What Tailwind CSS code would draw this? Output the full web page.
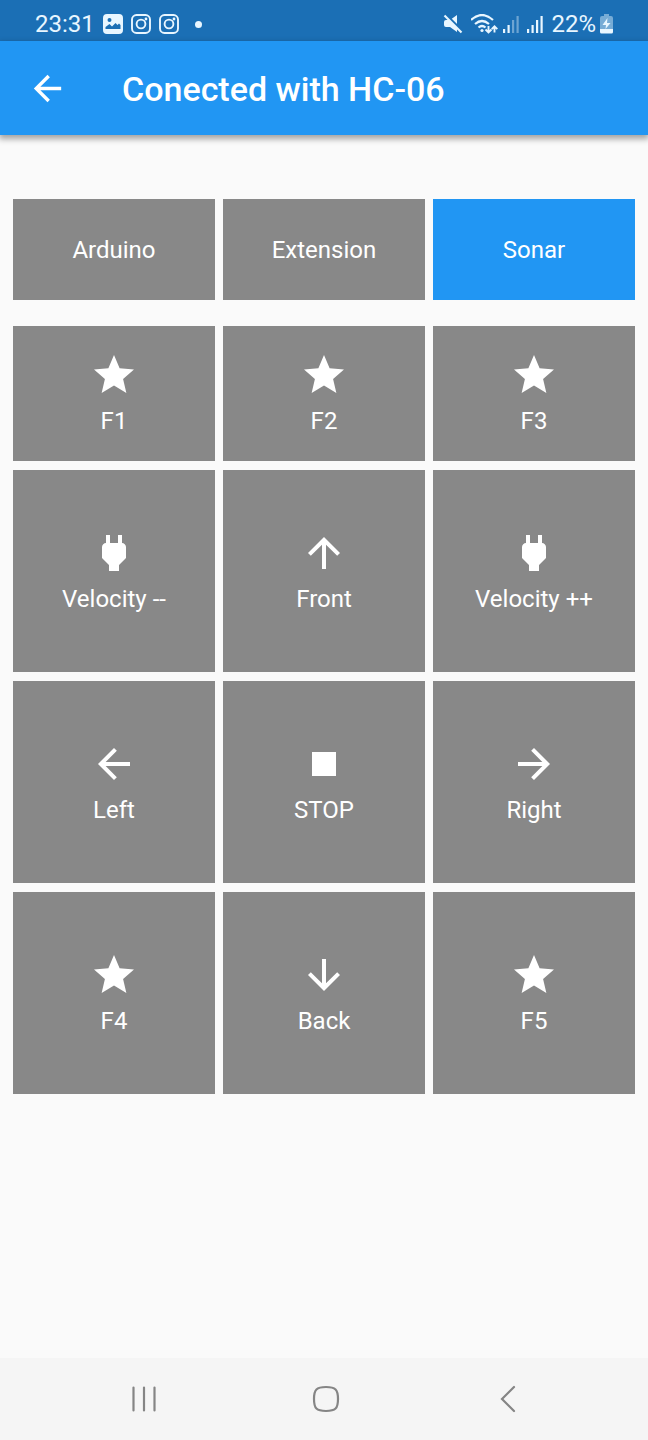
<!DOCTYPE html>
<html lang="en">
<head>
<meta charset="utf-8">
<meta name="viewport" content="width=device-width, initial-scale=1">
<title>Conected with HC-06</title>
<script src="https://cdn.jsdelivr.net/npm/@tailwindcss/browser@4"></script>
</head>
<body class="flex min-h-screen flex-col bg-[#fafafa] font-['Roboto',sans-serif] text-2xl leading-7 text-white">
<svg class="hidden">
  <symbol id="star" viewBox="0 0 24 24"><path d="M12 17.27 18.18 21l-1.64-7.03L22 9.24l-7.19-.61L12 2 9.19 8.63 2 9.24l5.46 4.73L5.82 21z"/></symbol>
  <symbol id="plug" viewBox="0 0 24 24"><path d="M16.01 7 16 3h-2v4h-4V3H8v4h-.01C7 6.990 6 7.990 6 8.990v5.490L9.500 18v3h5v-3l3.500-3.510v-5.500c0-1-1-2-1.990-1.990z"/></symbol>
  <symbol id="left" viewBox="0 0 24 24"><path d="M20 11H7.830l5.590-5.590L12 4l-8 8 8 8 1.410-1.410L7.830 13H20v-2z"/></symbol>
  <symbol id="stop" viewBox="0 0 24 24"><path d="M6 6h12v12H6z"/></symbol>
  <symbol id="insta" viewBox="0 0 20 20"><g fill="none" stroke="currentColor" stroke-width="1.900"><rect x="1" y="1" width="18" height="18" rx="4.500"/><circle cx="10" cy="10" r="4.400"/></g><circle cx="15" cy="5" r="1.400" fill="currentColor"/></symbol>
</svg>

<div class="flex h-[41px] items-center justify-between bg-[#1b6fb5] pt-[7px] pr-[35px] pl-[35px] text-[#e8f6ff]">
  <div class="flex items-center">
    <span class="mr-2">23:31</span>
    <svg class="mr-2 size-5" viewBox="0 0 20 20"><path fill="currentColor" fill-rule="evenodd" d="M4 0h12q4 0 4 4v12q0 4-4 4H4q-4 0-4-4V4q0-4 4-4zM2.500 15h15v-4l-1.500-1.500-1.500 1.500L12.500 9 9 12.500 6.500 10l-4 3zM6.500 4a2 2 0 1 0 0 4 2 2 0 0 0 0-4z"/></svg>
    <svg class="mr-2 size-5"><use href="#insta"/></svg>
    <svg class="mr-4 size-5"><use href="#insta"/></svg>
    <span class="size-[7px] rounded-full bg-current"></span>
  </div>
  <div class="flex items-center">
    <svg class="mr-2 size-5" viewBox="0 0 20 20" fill="currentColor"><path d="M3 6h4l7-5v17l-7-5H3q-2 0-2-2V8q0-2 2-2z"/><path d="M1.500-.5 20 18" fill="none" stroke="#1b6fb5" stroke-width="3"/><path d="m1.500 1.500 17 17" fill="none" stroke="currentColor" stroke-width="2.200"/></svg>
    <svg class="mr-1 h-5 w-7" viewBox="0 0 28 20" fill="none" stroke="currentColor" stroke-width="2.200"><path d="M0 6q11-10 22 0M4 10q7-6 14 0M7.500 13.500q3.500-3 7 0"/><circle cx="11" cy="16.500" r="1.600" fill="currentColor" stroke="none"/><path stroke-width="1.900" d="M17.500 12v6m-3-2.500 3 3 3-3M23.500 18.500v-6m-2.800 2.700 2.800-2.800 2.800 2.800"/></svg>
    <svg class="mr-2 h-5 w-4" viewBox="0 0 16 20" fill="currentColor"><path d="M0 15h2.200v4H0zM4.500 11h2.200v8H4.500z"/><path opacity=".4" d="M9 6h2.200v13H9zM13.500 2h2.200v17h-2.200z"/></svg>
    <svg class="mr-2 h-5 w-4" viewBox="0 0 16 20" fill="currentColor"><path d="M0 15h2.200v4H0zM4.500 11h2.200v8H4.500zM9 6h2.200v13H9zM13.500 2h2.200v17h-2.200z"/></svg>
    <span class="mr-1">22%</span>
    <svg class="h-5 w-[13px]" viewBox="0 0 13 20" fill="currentColor"><path opacity=".45" d="M4 0h5v2h2q2 0 2 2v11H0V4q0-2 2-2h2z"/><path d="M0 15h13v3q0 1.500-1.500 1.500h-10Q0 19.500 0 18zM7.500 4 2.500 11H6l-.500 4 5-6H7z"/></svg>
  </div>
</div>

<header class="flex h-[94px] items-center bg-[#2196f3] pl-[27px] shadow-[0_3px_6px_1px_rgba(0,0,0,0.35)]">
  <button type="button" aria-label="Go back" class="mr-[54px]"><svg class="size-[41px]" fill="currentColor"><use href="#left"/></svg></button>
  <h1 class="pt-[2px] text-[34px] leading-10 font-medium">Conected with HC-06</h1>
</header>

<main class="flex grow flex-col gap-[26px] px-[13px] pt-16">
  <div class="grid grid-cols-3 gap-2">
    <button type="button" class="aspect-[2/1] bg-[#888888]">Arduino</button>
    <button type="button" class="aspect-[2/1] bg-[#888888]">Extension</button>
    <button type="button" class="aspect-[2/1] bg-[#2196f3]">Sonar</button>
  </div>
  <div class="grid grid-cols-3 gap-x-2 gap-y-[9px]">
    <button type="button" class="flex aspect-[3/2] flex-col items-center justify-center gap-2 bg-[#888888]"><svg class="size-12" fill="currentColor"><use href="#star"/></svg>F1</button>
    <button type="button" class="flex aspect-[3/2] flex-col items-center justify-center gap-2 bg-[#888888]"><svg class="size-12" fill="currentColor"><use href="#star"/></svg>F2</button>
    <button type="button" class="flex aspect-[3/2] flex-col items-center justify-center gap-2 bg-[#888888]"><svg class="size-12" fill="currentColor"><use href="#star"/></svg>F3</button>
    <button type="button" class="flex aspect-square flex-col items-center justify-center gap-2 bg-[#888888]"><svg class="size-12" fill="currentColor"><use href="#plug"/></svg>Velocity --</button>
    <button type="button" class="flex aspect-square flex-col items-center justify-center gap-2 bg-[#888888]"><svg class="size-12 rotate-90" fill="currentColor"><use href="#left"/></svg>Front</button>
    <button type="button" class="flex aspect-square flex-col items-center justify-center gap-2 bg-[#888888]"><svg class="size-12" fill="currentColor"><use href="#plug"/></svg>Velocity ++</button>
    <button type="button" class="flex aspect-square flex-col items-center justify-center gap-2 bg-[#888888]"><svg class="size-12" fill="currentColor"><use href="#left"/></svg>Left</button>
    <button type="button" class="flex aspect-square flex-col items-center justify-center gap-2 bg-[#888888]"><svg class="size-12" fill="currentColor"><use href="#stop"/></svg>STOP</button>
    <button type="button" class="flex aspect-square flex-col items-center justify-center gap-2 bg-[#888888]"><svg class="size-12 rotate-180" fill="currentColor"><use href="#left"/></svg>Right</button>
    <button type="button" class="flex aspect-square flex-col items-center justify-center gap-2 bg-[#888888]"><svg class="size-12" fill="currentColor"><use href="#star"/></svg>F4</button>
    <button type="button" class="flex aspect-square flex-col items-center justify-center gap-2 bg-[#888888]"><svg class="size-12 -rotate-90" fill="currentColor"><use href="#left"/></svg>Back</button>
    <button type="button" class="flex aspect-square flex-col items-center justify-center gap-2 bg-[#888888]"><svg class="size-12" fill="currentColor"><use href="#star"/></svg>F5</button>
  </div>
</main>

<nav aria-label="System navigation" class="flex h-[82px] items-center justify-between bg-[#f5f5f5] pr-[126px] pl-[130px] text-[#858585]">
  <button type="button" aria-label="Recent apps"><svg class="size-7" viewBox="0 0 28 28" fill="none" stroke="currentColor" stroke-width="2.200" stroke-linecap="round"><path d="M3.500 2.500v23M14 2.500v23M24.500 2.500v23"/></svg></button>
  <button type="button" aria-label="Home"><svg class="size-7" viewBox="0 0 28 28" fill="none" stroke="currentColor" stroke-width="2.200"><path d="M14 2c9.500 0 12 2.500 12 12s-2.500 12-12 12S2 23.500 2 14 4.500 2 14 2z"/></svg></button>
  <button type="button" aria-label="Back"><svg class="size-7" viewBox="0 0 28 28" fill="none" stroke="currentColor" stroke-width="2.200" stroke-linecap="round"><path d="M20 2 8 14l12 12"/></svg></button>
</nav>
</body>
</html>
